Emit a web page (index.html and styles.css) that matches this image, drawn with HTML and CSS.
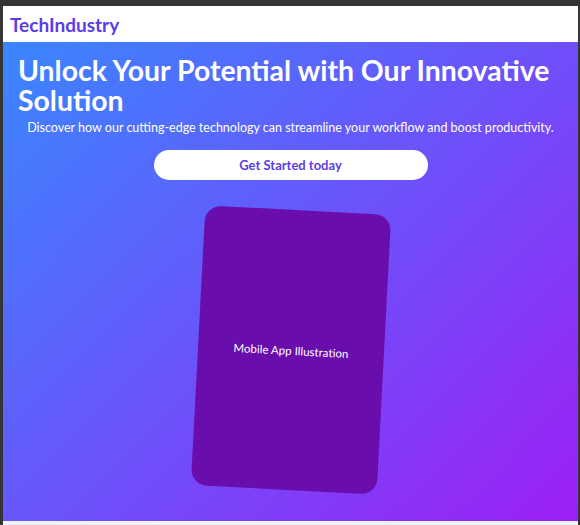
FILE: index.html
```html
<!DOCTYPE html>
<html lang="en">
<head>
<meta charset="utf-8">
<title>TechIndustry</title>
<link rel="stylesheet" href="styles.css">
</head>
<body>
<div class="page">
  <header class="site-header">
    <span class="logo">TechIndustry</span>
  </header>
  <section class="hero">
    <h1 class="hero-title">Unlock Your Potential with Our Innovative Solution</h1>
    <p class="hero-sub">Discover how our cutting-edge technology can streamline your workflow and boost productivity.</p>
    <div class="cta-row">
      <a class="cta" href="#">Get Started today</a>
    </div>
    <div class="mock-row">
      <div class="mock">Mobile App Illustration</div>
    </div>
  </section>
</div>
</body>
</html>
```
FILE: styles.css
```css
html, body {
  margin: 0;
  padding: 0;
}
body {
  background: #353535;
  padding: 6px 2px 0 3px;
  height: 525px;
  box-sizing: border-box;
  overflow: hidden;
  font-family: Lato, "Open Sans", sans-serif;
}
.page {
  background: #f0f4f8;
  height: 100%;
}
.site-header {
  height: 36px;
  background: #ffffff;
  display: flex;
  align-items: center;
  padding: 0 7px;
}
.logo {
  font-weight: 700;
  font-size: 19px;
  color: #5a3de6;
}
.hero {
  height: 479px;
  box-sizing: border-box;
  background: linear-gradient(135deg, #3a86ff 0%, #9d1ff4 100%);
  padding-top: 13px;
  color: #ffffff;
  overflow: hidden;
}
.hero-title {
  margin: 0;
  padding: 0 15px;
  font-size: 28.4px;
  line-height: 30px;
  font-weight: 700;
}
.hero-sub {
  margin: 4px 0 0;
  text-align: center;
  font-size: 12.5px;
  line-height: 18px;
  white-space: nowrap;
}
.cta-row {
  display: flex;
  justify-content: center;
  margin-top: 13px;
}
.cta {
  width: 274px;
  height: 30px;
  border-radius: 15px;
  background: #ffffff;
  color: #5a3de6;
  font-weight: 700;
  font-size: 13px;
  display: flex;
  align-items: center;
  justify-content: center;
  text-decoration: none;
}
.mock-row {
  display: flex;
  justify-content: center;
  margin-top: 30px;
}
.mock {
  width: 186px;
  height: 280px;
  border-radius: 16px;
  background: #6a0dad;
  transform: rotate(3deg);
  display: flex;
  align-items: center;
  justify-content: center;
  font-family: Lato, sans-serif;
  font-size: 11.5px;
  color: #ffffff;
}
```
